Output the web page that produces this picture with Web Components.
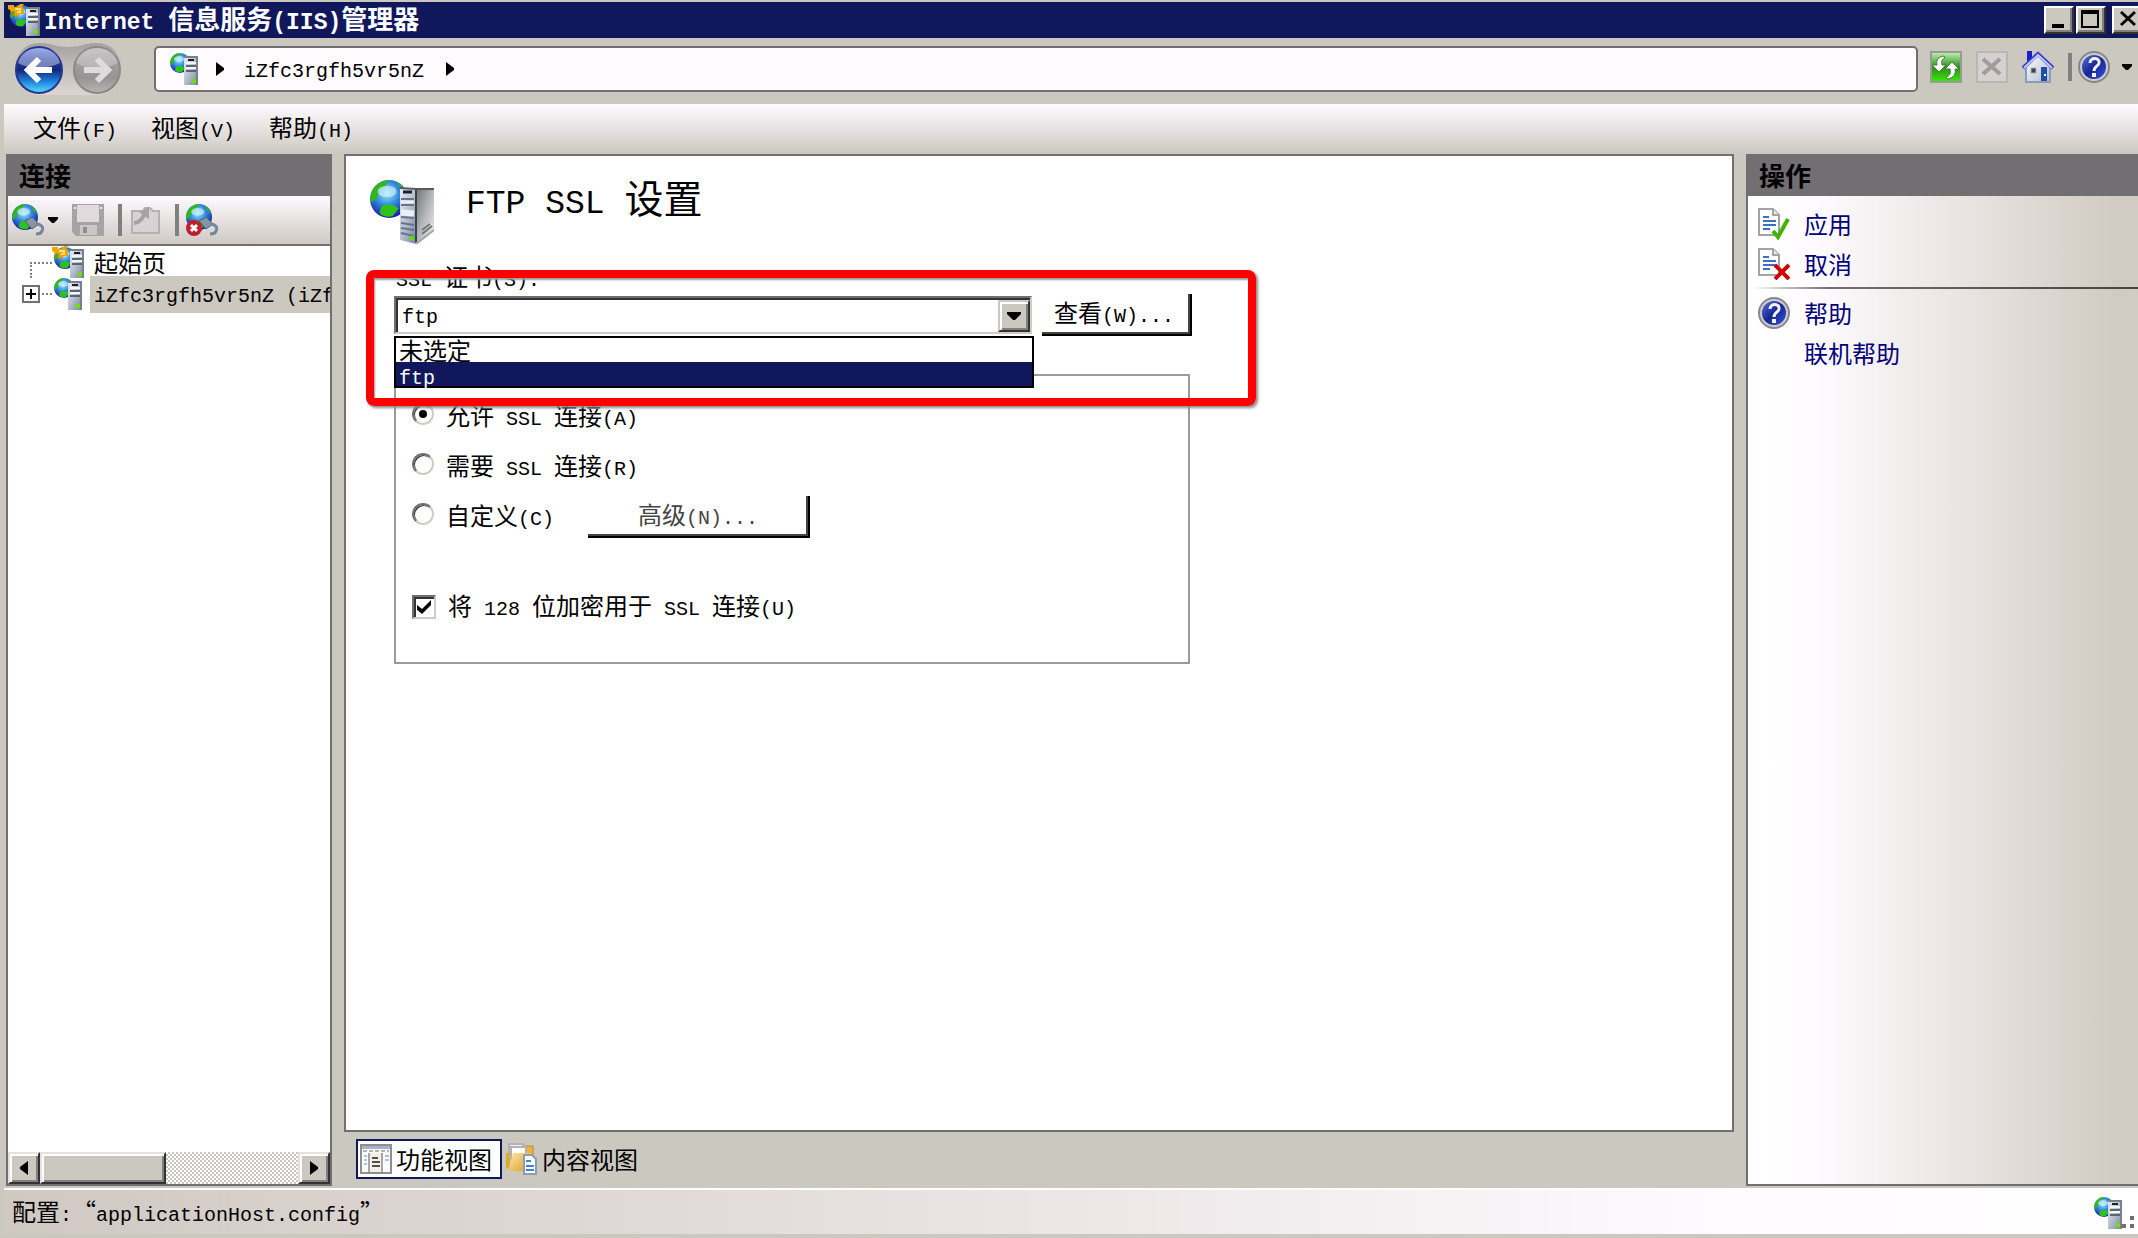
<!DOCTYPE html>
<html lang="zh-CN">
<head>
<meta charset="UTF-8">
<meta name="viewport" content="width=device-width, initial-scale=1.0">
<title>Internet 信息服务(IIS)管理器</title>
<style>
    body {
        margin: 0;
        background: #cbc8bf;
        font-family: "Noto Sans CJK SC", sans-serif;
        font-size: 24px;
        line-height: 32px;
        color: #000;
    }
</style>
</head>
<body>
<iis-manager></iis-manager>

<script>
// Latin runs use a fixed width face at half the width of a Chinese character
const t = (text) => text.replace(/[\x20-\x7e]+/g, (run) => `<span class="en">${run}</span>`);

const base = /*css*/ `
    * { box-sizing: border-box; }
    .en {
        font-family: "Liberation Mono", monospace;
        font-size: var(--en, 20px);
        white-space: pre;
    }
    button {
        font: inherit;
        color: inherit;
        padding: 0;
        border: 0;
        background: none;
    }
`;

const globe = (cx, cy, r) => /*html*/ `
    <g transform="translate(${cx} ${cy}) scale(${r / 10})">
        <circle r="10" fill="url(#sea)"/>
        <path d="M-9-4C-7-8-3-10 0-10L-2-7-5-5-6-1-9 2-10 0Z" fill="#35b51c"/>
        <path d="M-4 4C-1 2 3 3 5 5L2 9C-1 10-4 9-5 7Z" fill="#2fc21a"/>
        <path d="M4-9C7-8 9-5 9-2L6-5Z" fill="#3aa34a"/>
        <ellipse cx="-1" cy="-4" rx="5" ry="3" fill="#d8f6ff" opacity=".6"/>
    </g>`;
const tower = /*html*/ `
    <path d="M14 4H28V32H14Z" fill="url(#steel)"/>
    <path d="M14 4H28M27 4V32" stroke="#77808e" stroke-width="2"/>
    <path d="M18 7H24" stroke="#1d2028" stroke-width="2"/>
    <path d="M16 13H26M16 18H26" stroke="#5d6471" stroke-width="2"/>
    <path d="M16 10H26M16 15H26" stroke="#f4f6fa" stroke-width="2"/>
    <path d="M22 26H26V30H22Z" fill="#6fe000"/>`;
const page = /*html*/ `
    <path d="M1 1H15L21 7V27H1Z" fill="#fff" stroke="#a3a3a3" stroke-width="2"/>
    <path d="M15 1V7H21" fill="#eee" stroke="#a3a3a3" stroke-width="2"/>
    <path d="M5 9H11M5 13H18M5 17H18M5 21H12" stroke="#3a70bd" stroke-width="2"/>`;
const plug = /*html*/ `
    <path d="M13 17L20 13L27 20L20 25Z" fill="#8296a6" stroke="#4e5e6c"/>
    <path d="M24 20C29 20 32 23 30 27C29 30 27 30 24 30" fill="none" stroke="#71899c" stroke-width="3"/>`;

const icons = {
    server: ["0 0 28 32", globe(10, 10, 10) + tower],
    iis: ["0 0 32 32", /*html*/ `${globe(13, 12, 11)}
        <g transform="translate(4 0)">${tower}</g>
        <path d="M0 1H6V3H9L12 0H16L14 3 16 5V10H12L10 12H6L7 9 5 7 3 9 2 6 0 5Z" fill="#f5a300"/>
        <path d="M7 5H12V8H9" fill="none" stroke="#ffe07a" stroke-width="2"/>
        <path d="M3 8L6 12H10" fill="none" stroke="#c97e00"/>`],
    site: ["0 0 64 64", /*html*/ `${globe(19, 19, 19)}
        <path d="M30 8L46 10V64L30 60Z" fill="url(#steel)"/>
        <path d="M46 10L64 8V50L46 64Z" fill="url(#side)"/>
        <path d="M30 8L46 9H64" fill="none" stroke="#555b60" stroke-width="2"/>
        <path d="M33 12H42" stroke="#1d2028" stroke-width="3"/>
        <path d="M31 19H44M31 25H44M31 37L44 38M31 43L44 45M31 48L44 50M31 53L44 56" stroke="#66758c" stroke-width="2"/>
        <path d="M31 22H44M31 31L44 32M31 34L44 35" stroke="#e9eef8" stroke-width="3"/>
        <path d="M46 10V62" stroke="#3c4248" stroke-width="2"/>
        <path d="M52 54L62 46M52 50L60 44" stroke="#777" stroke-width="2"/>
        <path d="M46 64L64 50" stroke="#a5a5a5" stroke-width="2"/>
        <path d="M40 56H44V60H40Z" fill="#57e000"/>`],
    connect: ["0 0 32 32", globe(13, 13, 13) + plug],
    disconnect: ["0 0 32 32", /*html*/ `${globe(13, 13, 13)}${plug}
        <circle cx="8" cy="24" r="8" fill="#c01f2c"/>
        <path d="M5 21L11 27M11 21L5 27" stroke="#fff" stroke-width="3"/>`],
    save: ["0 0 32 32", /*html*/ `
        <path d="M0 0H32V32H4L0 28Z" fill="#a6a3a5"/>
        <path d="M5 1H27V18H5Z" fill="#e1dbdd"/>
        <path d="M8 21H25V31H8Z" fill="#cbc6c8"/>
        <path d="M11 23H15V29H11Z" fill="#918e90"/>
        <path d="M2 3H4V5H2ZM28 3H30V5H28Z" fill="#f7f2f4"/>`],
    up: ["0 0 32 32", /*html*/ `
        <path d="M3 7H14L16 4H21L24 7H30V29H3Z" fill="#d8d2d4" stroke="#b5b0b1" stroke-width="2"/>
        <path d="M5 19C10 19 13 16 16 9" fill="none" stroke="#a6a2a4" stroke-width="4"/>
        <path d="M10 8L20 3V15Z" fill="#a6a2a4"/>`],
    refresh: ["0 0 32 32", /*html*/ `
        <path d="M1 1H31V31H1Z" fill="url(#leaf)" stroke="#9a9a9d" stroke-width="2"/>
        <path d="M14 5C8 6 6 9 7 14H2L9 21 16 14H12C11 10 12 8 15 7Z" fill="#fff" stroke="#467646"/>
        <path d="M17 28C24 27 26 23 25 18H29L22 11 15 18H20C21 22 20 25 16 26Z" fill="#fff" stroke="#467646"/>`],
    stop: ["0 0 32 32", /*html*/ `
        <path d="M1 1H31V31H1Z" fill="#d6d0d0" stroke="#bab5b6" stroke-width="2"/>
        <path d="M7 8L24 23M24 8L7 23" stroke="#a09c9c" stroke-width="4"/>`],
    home: ["0 0 32 32", /*html*/ `
        <path d="M4 14L16 3 28 14V31H4Z" fill="url(#wall)" stroke="#8e9bb5" stroke-width="2"/>
        <path d="M5 0H10V7L5 11Z" fill="#1c20c4"/>
        <path d="M1 17L16 3 31 17" fill="none" stroke="#3542d2" stroke-width="4"/>
        <path d="M2 17L16 4 30 17" fill="none" stroke="#c8cdf8" stroke-width="2"/>
        <path d="M9 17H14V22H9Z" fill="#444" stroke="#aaa"/>
        <path d="M19 16H25V30H19Z" fill="#1c4f9e"/>
        <path d="M22 23H24V25H22Z" fill="#fff"/>`],
    help: ["0 0 32 32", /*html*/ `
        <circle cx="16" cy="16" r="15" fill="#ccc" stroke="#88878a" stroke-width="2"/>
        <circle cx="16" cy="16" r="12" fill="url(#blue)"/>
        <path d="M12 12C12 6 22 6 21 12C21 15 16 15 16 20" fill="none" stroke="#f3f4ff" stroke-width="3"/>
        <path d="M14 22H18V26H14Z" fill="#f3f4ff"/>`],
    apply: ["0 0 32 32", page + `<path d="M15 23L20 29 30 11" fill="none" stroke="#3fb400" stroke-width="4"/>`],
    cancel: ["0 0 32 32", page + `<path d="M17 17L31 31M31 17L17 31" stroke="#d00000" stroke-width="4"/>`],
    features: ["0 0 32 32", /*html*/ `
        <path d="M1 2H31V30H1Z" fill="#fff" stroke="#8e8d93" stroke-width="2"/>
        <path d="M2 3H30V6H2Z" fill="#aab0ca"/>
        <path d="M3 8H29" stroke="#b5b2b0" stroke-width="2" stroke-dasharray="4 2"/>
        <path d="M9 10V29M22 10V29" stroke="#a6a5ac" stroke-width="2"/>
        <path d="M10 10H21V29H10Z" fill="#f5efe5"/>
        <path d="M12 15H18M12 19H20M12 23H20" stroke="#50504d" stroke-width="2"/>
        <path d="M4 13H7M4 17H7M4 21H7M25 13H29M25 17H29" stroke="#a9bfe5" stroke-width="2"/>`],
    content: ["0 0 32 32", /*html*/ `
        <path d="M17 3H27V24H17Z" fill="#e6b53f" stroke="#bd8d26"/>
        <path d="M3 1H17V16H3Z" fill="#f3f3f5" stroke="#b3b1b3" stroke-width="2"/>
        <path d="M5 4H20V16H5Z" fill="#fff" stroke="#b3b1b3" stroke-width="2"/>
        <path d="M0 10H4V24L0 26Z" fill="#dba93a"/>
        <path d="M7 10H25V26L20 28H2Z" fill="url(#gold)"/>
        <path d="M18 12H26L30 16V31H18Z" fill="#fff" stroke="#8d9bb5" stroke-width="2"/>
        <path d="M20 18H25M20 23H28M20 27H28" stroke="#477fd0" stroke-width="2"/>`],
    travel: ["0 0 108 54", /*html*/ `
        <path d="M26 1C38 1 40 5 54 5S70 1 82 1C99 1 107 13 107 27S97 53 82 53H26C10 53 1 41 1 27S10 1 26 1Z" fill="url(#pill)"/>
        <circle cx="25" cy="28" r="23" fill="url(#back)" stroke="#26368c" stroke-width="2"/>
        <path d="M4 21C8 1 42 1 46 21C34 27 14 27 4 21Z" fill="#fff" opacity=".4"/>
        <circle cx="83" cy="28" r="23" fill="url(#grey)" stroke="#8a8889" stroke-width="2"/>
        <path d="M62 21C66 1 100 1 104 21C92 27 72 27 62 21Z" fill="#fff" opacity=".25"/>
        <path d="M38 28H17M25 17L14 28 25 39" fill="none" stroke="#fff" stroke-width="6"/>
        <path d="M70 28H91M83 17L94 28 83 39" fill="none" stroke="#dedbdc" stroke-width="6"/>`],
    down: ["0 0 10 6", `<path d="M0 0H10V2L6 6H4L0 2Z"/>`],
    next: ["0 0 8 14", `<path d="M0 0L8 6V8L0 14Z"/>`],
    left: ["0 0 8 14", `<path d="M8 0L0 6V8L8 14Z"/>`],
    drop: ["0 0 14 8", `<path d="M0 0H14V2L8 8H6L0 2Z"/>`],
    min: ["0 0 20 18", `<path d="M4 14H16V18H4Z"/>`],
    max: ["0 0 20 18", `<path d="M2 2H18V17H2Z" fill="none" stroke="#000" stroke-width="2"/><path d="M1 0H19V4H1Z"/>`],
    close: ["0 0 20 18", `<path d="M5 2L19 15M19 2L5 15" stroke="#000" stroke-width="3"/>`],
    plus: ["0 0 18 18", `<path d="M1 1H17V17H1Z" fill="#fff" stroke="#716f72" stroke-width="2"/><path d="M4 9H14M9 4V14" stroke="#000" stroke-width="2"/>`],
    grip: ["0 0 12 12", `<path d="M8 0H12V4H8ZM0 8H4V12H0ZM8 8H12V12H8Z" fill="#716f72"/>`]
};

const gradient = (id, x, y, ...stops) =>
    `<linearGradient id="${id}" x1="0" y1="0" x2="${x}" y2="${y}">${stops.map((c, i) =>
        `<stop offset="${i / (stops.length - 1)}" stop-color="${c}"/>`).join("")}</linearGradient>`;

const defs = `<defs>
    <radialGradient id="sea" cx=".45" cy=".35" r=".65"><stop offset="0" stop-color="#9fe8ff"/><stop offset=".5" stop-color="#2f86dc"/><stop offset="1" stop-color="#1b1ba6"/></radialGradient>
    ${gradient("steel", 1, 1, "#e8edf5", "#b5bfcc", "#76839a")}
    ${gradient("side", 1, 1, "#6c7275", "#b4b7b8", "#f4f4f4")}
    ${gradient("leaf", 0, 1, "#c3f5b4", "#2f8e1d", "#35f000")}
    ${gradient("wall", 1, 1, "#ffffff", "#aebbd3")}
    ${gradient("blue", 1, 1, "#5571e4", "#17258f", "#3557e0")}
    ${gradient("gold", 1, 1, "#ffe7a1", "#d7a12f")}
    ${gradient("pill", 0, 1, "#a4a19e", "#c4bfbb", "#dcd4d2")}
    ${gradient("back", 0, 1, "#5b79d8", "#2340a8", "#12267c", "#1f82dc", "#5ce0ff")}
    ${gradient("grey", 0, 1, "#b6b3b3", "#a3a0a0", "#969393", "#b8b5b5")}
</defs>`;

class AppIcon extends HTMLElement{
    constructor(){
        super();
        this.attachShadow({mode: "open"});
    }
    connectedCallback(){
        const [box, shapes] = icons[this.getAttribute("name")];
        const [, , width, height] = box.split(" ");
        this.shadowRoot.innerHTML = /*html*/ `
        <style>
            :host { display: inline-flex; flex: none; }
            svg { display: block; }
        </style>
        <svg viewBox="${box}" width="${width}" height="${height}" aria-hidden="true">${defs}${shapes}</svg>`;
    }
}
customElements.define("app-icon", AppIcon);

class BaseElement extends HTMLElement{
    constructor(){
        super();
        this.attachShadow({mode: "open"});
    }
    connectedCallback(){
        const template = document.createElement("template");
        template.innerHTML = `<style>${base}${this.getStyle()}</style>${this.getTemplate()}`;
        this.shadowRoot.appendChild(template.content.cloneNode(true));
    }
}

class TitleBar extends BaseElement{
    getStyle(){
        return /*css*/ `
            :host {
                display: flex;
                align-items: center;
                height: 36px;
                padding-left: 4px;
                background: #10175a;
                color: #fff;
            }
            h1 {
                flex: 1;
                margin: 0 0 0 4px;
                font-size: 26px;
                line-height: 36px;
                --en: 23px;
            }
            .buttons { display: flex; gap: 2px; margin-right: -4px; }
            button {
                display: flex;
                width: 30px;
                height: 28px;
                padding: 2px;
                background: #cbc8bf;
                border: 2px solid;
                border-color: #fff #333 #333 #fff;
                box-shadow: inset -2px -2px #818080;
            }
            .close { margin-left: 4px; }
        `;
    }
    getTemplate(){
        return /*html*/ `
            <app-icon name="iis"></app-icon>
            <h1>${t("Internet 信息服务(IIS)管理器")}</h1>
            <div class="buttons">
                <button aria-label="最小化"><app-icon name="min"></app-icon></button>
                <button aria-label="最大化"><app-icon name="max"></app-icon></button>
                <button class="close" aria-label="关闭"><app-icon name="close"></app-icon></button>
            </div>`;
    }
}
customElements.define("title-bar", TitleBar);

class AddressBar extends BaseElement{
    getStyle(){
        return /*css*/ `
            :host {
                display: flex;
                align-items: center;
                height: 66px;
                padding: 0 6px 4px 10px;
            }
            .path {
                flex: 1;
                display: flex;
                align-items: center;
                height: 46px;
                margin: 0 12px 0 32px;
                padding-left: 14px;
                background: #fffbff;
                border: 2px solid #716f72;
                border-radius: 5px;
            }
            .path app-icon + app-icon { margin: 0 20px 0 18px; }
            .path button { margin-right: 22px; }
            .tools { display: flex; align-items: center; gap: 14px; padding-bottom: 4px; }
            .tools button { display: flex; }
            .bar { width: 4px; height: 28px; background: #817f80; }
            .help { gap: 12px; align-items: center; margin-left: -8px; }
        `;
    }
    getTemplate(){
        return /*html*/ `
            <app-icon name="travel"></app-icon>
            <nav class="path">
                <app-icon name="server"></app-icon><app-icon name="next"></app-icon>
                <button>${t("iZfc3rgfh5vr5nZ")}</button>
                <app-icon name="next"></app-icon>
            </nav>
            <div class="tools">
                <button aria-label="刷新"><app-icon name="refresh"></app-icon></button>
                <button aria-label="停止"><app-icon name="stop"></app-icon></button>
                <button aria-label="主页"><app-icon name="home"></app-icon></button>
                <span class="bar"></span>
                <button class="help" aria-label="帮助"><app-icon name="help"></app-icon><app-icon name="down"></app-icon></button>
            </div>`;
    }
}
customElements.define("address-bar", AddressBar);

class MenuBar extends BaseElement{
    getStyle(){
        return /*css*/ `
            :host {
                display: flex;
                align-items: center;
                gap: 34px;
                height: 50px;
                padding-left: 29px;
                background: linear-gradient(#fffbff, #e2dddb 60%, #cbc8bf);
            }
        `;
    }
    getTemplate(){
        return ["文件(F)", "视图(V)", "帮助(H)"].map((name) => `<button>${t(name)}</button>`).join("");
    }
}
customElements.define("menu-bar", MenuBar);

class SidePanel extends BaseElement{
    getStyle(){
        return /*css*/ `
            :host {
                display: flex;
                flex-direction: column;
                min-width: 0;
                border: 2px solid #716f72;
                border-top: 0;
                background: #fff;
            }
            h2 {
                margin: 0;
                height: 42px;
                padding-left: 11px;
                background: #716f72;
                font-size: 26px;
                line-height: 42px;
            }
        `;
    }
    getTemplate(){
        return /*html*/ `<h2>${this.getAttribute("heading")}</h2><slot></slot>`;
    }
}
customElements.define("side-panel", SidePanel);

class ConnectionTree extends BaseElement{
    getStyle(){
        return /*css*/ `
            :host {
                flex: 1;
                display: flex;
                flex-direction: column;
                min-width: 0;
            }
            .tools {
                display: flex;
                align-items: center;
                height: 50px;
                padding-left: 4px;
                border-bottom: 2px solid #716f72;
                background: linear-gradient(#fffbff, #cfc9c3);
            }
            .tools button { display: flex; align-items: center; gap: 4px; margin-right: 14px; }
            .bar { width: 4px; height: 32px; margin-right: 7px; background: #817f80; }
            ul {
                flex: 1;
                margin: 0;
                padding: 0;
                list-style: none;
                overflow-x: clip;
            }
            li { display: flex; align-items: center; height: 32px; white-space: nowrap; }
            .line {
                flex: none;
                width: 22px;
                height: 16px;
                margin: 16px 0 0 22px;
                border: 2px dotted #808080;
                border-width: 2px 0 0 2px;
            }
            .stub { flex: none; width: 10px; margin: 0 2px; border-top: 2px dotted #808080; }
            app-icon[name="plus"] { margin-left: 14px; }
            a { flex: 1; margin-left: 6px; padding-left: 4px; color: inherit; text-decoration: none; }
            .selected a { margin-left: 8px; background: #cbc8bf; }
            .scroll {
                display: flex;
                height: 32px;
                background: repeating-conic-gradient(#fff 0 25%, #cbc8bf 0 50%) 0 0 / 4px 4px;
            }
            .scroll button {
                display: flex;
                align-items: center;
                justify-content: center;
                width: 32px;
                background: #cbc8bf;
                border: 2px solid;
                border-color: #e5e1dc #333 #333 #e5e1dc;
                box-shadow: inset 2px 2px #fff, inset -2px -2px #818080;
            }
            .scroll .thumb { width: 39%; }
            .scroll .end { margin-left: auto; }
        `;
    }
    getTemplate(){
        return /*html*/ `
            <div class="tools">
                <button aria-label="连接"><app-icon name="connect"></app-icon><app-icon name="down"></app-icon></button>
                <button aria-label="保存"><app-icon name="save"></app-icon></button>
                <span class="bar"></span>
                <button aria-label="向上"><app-icon name="up"></app-icon></button>
                <span class="bar"></span>
                <button aria-label="断开"><app-icon name="disconnect"></app-icon></button>
            </div>
            <ul>
                <li><span class="line"></span><app-icon name="iis"></app-icon><a href="#start">起始页</a></li>
                <li class="selected"><app-icon name="plus"></app-icon><span class="stub"></span><app-icon name="server"></app-icon><a href="#server">${t("iZfc3rgfh5vr5nZ (iZf")}</a></li>
            </ul>
            <div class="scroll">
                <button aria-label="向左滚动"><app-icon name="left"></app-icon></button>
                <button class="thumb" aria-label="滚动条"></button>
                <button class="end" aria-label="向右滚动"><app-icon name="next"></app-icon></button>
            </div>`;
    }
}
customElements.define("connection-tree", ConnectionTree);

class ComboBox extends BaseElement{
    getStyle(){
        return /*css*/ `
            :host { display: block; position: relative; width: 638px; }
            .box {
                display: flex;
                height: 38px;
                border: 2px solid;
                border-color: #716f72 #d2cbc3 #d2cbc3 #716f72;
                box-shadow: inset 2px 2px #333;
            }
            select {
                flex: 1;
                min-width: 0;
                padding: 4px 6px 0;
                border: 0;
                appearance: none;
                background: none;
                font: 20px "Liberation Mono", monospace;
                color: #000;
            }
            .arrow {
                display: flex;
                align-items: center;
                justify-content: center;
                width: 32px;
                margin-top: 2px;
                background: #cbc8bf;
                border: 2px solid;
                border-color: #cbc8bf #333 #333 #cbc8bf;
                box-shadow: inset 2px 2px #fff, inset -2px -2px #818080;
            }
            ul {
                position: absolute;
                top: 40px;
                left: 0;
                z-index: 1;
                width: 640px;
                margin: 0;
                padding: 0;
                list-style: none;
                background: #fff;
                border: 2px solid #000;
            }
            li { height: 24px; padding-left: 3px; line-height: 24px; }
            li[aria-selected="true"] { background: #10175a; color: #fff; }
        `;
    }
    getTemplate(){
        return /*html*/ `
            <div class="box">
                <select aria-label="SSL 证书(S):"><option>ftp</option></select>
                <span class="arrow"><app-icon name="drop"></app-icon></span>
            </div>
            <ul role="listbox">
                <li role="option">未选定</li>
                <li role="option" aria-selected="true">${t("ftp")}</li>
            </ul>`;
    }
}
customElements.define("combo-box", ComboBox);

class SslSettings extends BaseElement{
    getStyle(){
        return /*css*/ `
            :host {
                display: block;
                min-height: 0;
                padding: 24px;
                background: #fff;
                border: 2px solid #716f72;
            }
            header { display: flex; gap: 32px; height: 78px; }
            h2 {
                margin: 0;
                font-size: 39px;
                font-weight: 400;
                line-height: 32px;
                --en: 33px;
            }
            form { position: relative; width: 798px; margin-left: 24px; }
            .caption { padding: 2px 0 0 2px; height: 36px; }
            .cert { display: flex; justify-content: space-between; }
            combo-box { margin-top: 2px; }
            .push {
                height: 42px;
                border: 2px solid #000;
                border-width: 0 2px 2px 0;
                box-shadow: inset -2px -2px #444;
            }
            .push:disabled { color: #444; }
            .view { width: 150px; padding-right: 4px; }
            .more { width: 222px; margin-left: 34px; }
            fieldset {
                display: grid;
                grid-auto-rows: 50px;
                align-items: center;
                width: 796px;
                height: 290px;
                margin: 38px 0 0;
                padding: 16px 16px 8px;
                border: 2px solid #9b9b9b;
            }
            .row { display: flex; align-items: center; }
            .row label { padding-left: 12px; }
            .encrypt { margin-top: 80px; }
            input {
                flex: none;
                appearance: none;
                display: grid;
                place-items: center;
                width: 24px;
                height: 24px;
                margin: 0;
                border: 2px solid;
                border-color: #716f72 #d2cbc3 #d2cbc3 #716f72;
                background: #fff;
                box-shadow: inset 2px 2px #333;
            }
            input[type="radio"] { width: 22px; height: 22px; margin-bottom: 6px; border-radius: 50%; box-shadow: inset 1px 1px #333; }
            input[type="radio"]:checked::before { content: ""; width: 8px; height: 8px; border-radius: 50%; background: #000; }
            input[type="checkbox"]:checked::before {
                content: "";
                width: 14px;
                height: 14px;
                background: #000;
                clip-path: polygon(0 36%, 36% 64%, 100% 0, 100% 36%, 36% 100%, 0 70%);
            }
            .mark {
                position: absolute;
                top: 12px;
                left: -28px;
                z-index: 2;
                width: 890px;
                height: 136px;
                border: 8px solid #f00;
                border-radius: 8px;
                box-shadow: 2px 2px 3px #888, inset 1px 2px 2px #999;
                pointer-events: none;
            }
        `;
    }
    getTemplate(){
        const radios = [["allow", "允许 SSL 连接(A)"], ["require", "需要 SSL 连接(R)"], ["custom", "自定义(C)"]];
        return /*html*/ `
            <header><app-icon name="site"></app-icon><h2>${t("FTP SSL 设置")}</h2></header>
            <form>
                <div class="caption">${t("SSL 证书(S):")}</div>
                <div class="cert">
                    <combo-box></combo-box>
                    <button type="button" class="push view">${t("查看(W)...")}</button>
                </div>
                <fieldset>
                    ${radios.map(([id, name], i) => /*html*/ `
                    <div class="row">
                        <input type="radio" name="policy" id="${id}"${i ? "" : " checked"}>
                        <label for="${id}">${t(name)}</label>
                        ${i == 2 ? `<button type="button" class="push more" disabled>${t("高级(N)...")}</button>` : ""}
                    </div>`).join("")}
                    <div class="row encrypt">
                        <input type="checkbox" id="encrypt" checked>
                        <label for="encrypt">${t("将 128 位加密用于 SSL 连接(U)")}</label>
                    </div>
                </fieldset>
                <div class="mark"></div>
            </form>`;
    }
}
customElements.define("ssl-settings", SslSettings);

class ViewTabs extends BaseElement{
    getStyle(){
        return /*css*/ `
            :host { display: flex; align-items: center; height: 54px; padding-left: 12px; }
            button {
                display: flex;
                align-items: center;
                gap: 4px;
                height: 40px;
                padding: 0 8px 0 2px;
                border: 2px solid transparent;
            }
            .active { background: #fff; border-color: #10175a; }
        `;
    }
    getTemplate(){
        return /*html*/ `
            <button class="active"><app-icon name="features"></app-icon>功能视图</button>
            <button><app-icon name="content"></app-icon>内容视图</button>`;
    }
}
customElements.define("view-tabs", ViewTabs);

class ActionList extends BaseElement{
    getStyle(){
        return /*css*/ `
            :host {
                flex: 1;
                padding: 8px 0 0 10px;
                background: linear-gradient(90deg, #fff 6%, #fffbff 16%, #e9e4e1 56%, #d2cbc3 94%);
            }
            a {
                display: flex;
                align-items: center;
                gap: 14px;
                height: 40px;
                color: #00007b;
                text-decoration: none;
            }
            .plain { padding-left: 46px; }
            hr { height: 2px; margin: 3px 0 4px -6px; border: 0; background: linear-gradient(90deg, #fff, #716f72 20%, #444); }
        `;
    }
    getTemplate(){
        return /*html*/ `
            <a href="#apply"><app-icon name="apply"></app-icon>应用</a>
            <a href="#cancel"><app-icon name="cancel"></app-icon>取消</a>
            <hr>
            <a href="#help"><app-icon name="help"></app-icon>帮助</a>
            <a href="#online" class="plain">联机帮助</a>`;
    }
}
customElements.define("action-list", ActionList);

class StatusBar extends BaseElement{
    getStyle(){
        return /*css*/ `
            :host {
                display: flex;
                align-items: center;
                height: 46px;
                padding: 2px 4px 0 8px;
                border-top: 2px solid #fff;
                background: linear-gradient(90deg, #d0c9c2, #e0d9d7 30%, #fffbff 82%, #fff);
                box-sizing: border-box;
            }
            .text { flex: 1; }
            app-icon[name="grip"] { align-self: flex-end; margin-bottom: 6px; }
        `;
    }
    getTemplate(){
        return /*html*/ `
            <span class="text">${t("配置:“applicationHost.config”")}</span>
            <app-icon name="server"></app-icon>
            <app-icon name="grip"></app-icon>`;
    }
}
customElements.define("status-bar", StatusBar);

class IisManager extends BaseElement{
    getStyle(){
        return /*css*/ `
            :host {
                display: flex;
                flex-direction: column;
                height: 100vh;
                box-sizing: border-box;
                padding: 2px 0 4px 4px;
                overflow: hidden;
            }
            main {
                flex: 1;
                display: grid;
                grid-template-columns: 326px 1fr 392px;
                gap: 12px;
                min-height: 0;
                padding: 0 0 2px 2px;
            }
            .center { display: grid; grid-template-rows: 1fr 54px; min-width: 0; }
            .actions { margin-right: -2px; }
        `;
    }
    getTemplate(){
        return /*html*/ `
            <title-bar></title-bar>
            <address-bar></address-bar>
            <menu-bar></menu-bar>
            <main>
                <side-panel heading="连接"><connection-tree></connection-tree></side-panel>
                <div class="center">
                    <ssl-settings></ssl-settings>
                    <view-tabs></view-tabs>
                </div>
                <side-panel class="actions" heading="操作"><action-list></action-list></side-panel>
            </main>
            <status-bar></status-bar>`;
    }
}
customElements.define("iis-manager", IisManager);
</script>
</body>
</html>
